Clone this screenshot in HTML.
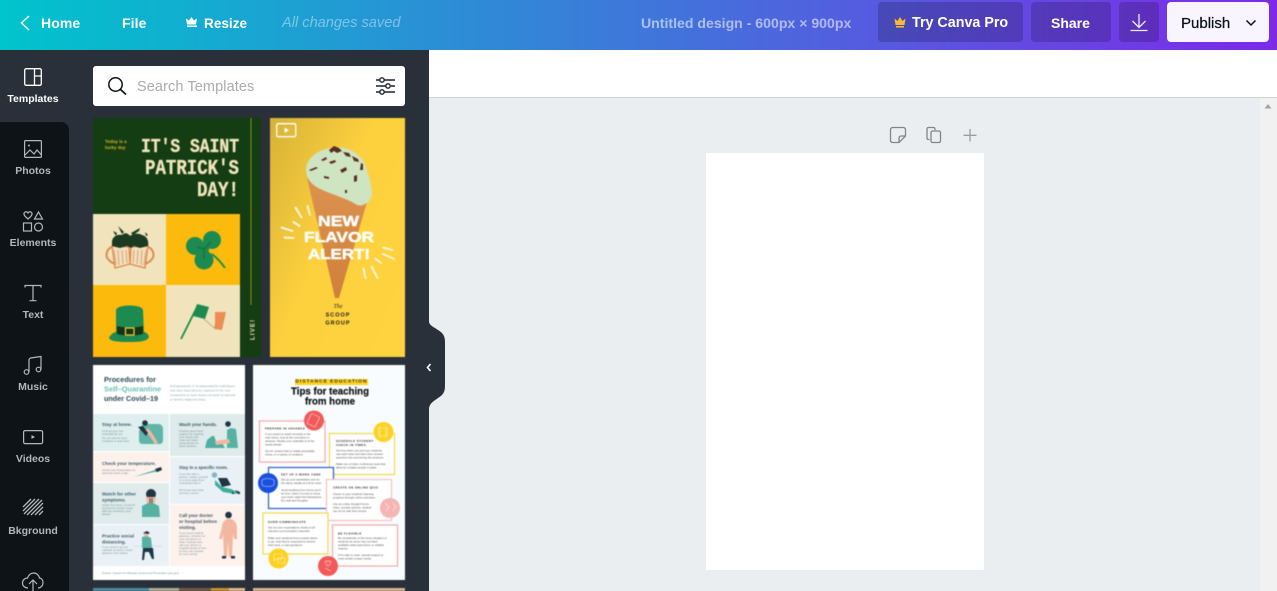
<!DOCTYPE html>
<html lang="en"><head><meta charset="utf-8"><title>Untitled design</title>
<style>
*{box-sizing:border-box}
html,body{margin:0;padding:0;width:1277px;height:591px;overflow:hidden;background:#ebeef1;font-family:"Liberation Sans",sans-serif}
.a{position:absolute}
#top{left:0;top:0;width:1277px;height:50px;background:linear-gradient(90deg,#00c4cc,#7d2ae8)}
#top span{position:absolute;top:15px;line-height:17px;font-size:14px;font-weight:700;color:#fff;white-space:nowrap}
.btn{position:absolute;top:2px;height:40px;border-radius:4px;background:rgba(0,0,0,.18)}
#sub{left:429px;top:50px;width:848px;height:48px;background:#fff;border-bottom:1px solid #d0d2d4}
#scroll{left:1260px;top:98px;width:17px;height:493px;background:#f1f1f1}
#page{left:706px;top:153px;width:278px;height:417px;background:#fff}
#panel{left:0;top:50px;width:429px;height:541px;background:#293039}
#rail{left:0;top:122px;width:69px;height:469px;background:#0e1318;border-top-right-radius:8px}
.lb{position:absolute;left:0;width:66px;text-align:center;font-size:10.5px;font-weight:700;color:#b4b7ba;line-height:12px}
#search{left:93px;top:66px;width:312px;height:40px;background:#fff;border-radius:3px}
#search span{position:absolute;left:44px;top:12px;font-size:14.5px;line-height:18px;color:#a9abad;letter-spacing:.1px}
svg{position:absolute;left:0;top:0;overflow:visible}
.th{filter:blur(.4px)}
</style></head><body>

<div class="a" id="sub"></div>
<div class="a" id="scroll"></div>
<div class="a" id="page"></div>
<div class="a" id="panel"></div>
<div class="a" id="rail"></div>

<div class="a" id="top">
<span style="left:41px;letter-spacing:.1px">Home</span>
<span style="left:122px;letter-spacing:.1px">File</span>
<span style="left:204px;font-size:13.6px">Resize</span>
<span style="left:282px;font-weight:400;font-style:italic;font-size:14.6px;color:rgba(255,255,255,.42)">All changes saved</span>
<span style="left:641px;font-size:14.1px;color:rgba(255,255,255,.55)">Untitled design - 600px × 900px</span>
<div class="btn" style="left:878px;width:145px"></div>
<div class="btn" style="left:1031px;width:80px"></div>
<div class="btn" style="left:1119px;width:40px"></div>
<div class="btn" style="left:1167px;width:102px;background:#f8f5fe"></div>
<span style="left:912px;top:15px;font-size:14.3px">Try Canva Pro</span>
<span style="left:1051px">Share</span>
<span style="left:1181px;top:15px;color:#0e1318;font-weight:400;font-size:15px;-webkit-text-stroke:.25px #0e1318">Publish</span>
</div>

<div class="lb" style="top:93px;color:#fff">Templates</div>
<div class="lb" style="top:165px">Photos</div>
<div class="lb" style="top:237px">Elements</div>
<div class="lb" style="top:309px">Text</div>
<div class="lb" style="top:381px">Music</div>
<div class="lb" style="top:453px">Videos</div>
<div class="lb" style="top:525px">Bkground</div>

<div class="a" id="search"><span>Search Templates</span></div>

<svg width="1277" height="591" viewBox="0 0 1277 591">
<!-- top bar icons -->
<path d="M29 16l-7.500 7 7.500 7" fill="none" stroke="#fff" stroke-width="1.400"/>
<path d="M186 18.500l3 2 2.500-3.500 2.500 3.500 3-2-1 6h-9zM187 25.500h10v1.500h-10z" fill="#fff"/>
<path d="M894.500 18.500l3 2.500 2.500-4 2.500 4 3-2.500-1 6.500h-9zM896 26h8v1.500h-8z" fill="#ffb92e"/>
<path d="M1139 14v13.500M1132.500 21l6.500 6.500 6.500-6.500M1130.500 30.500h17" fill="none" stroke="#f2ecfd" stroke-width="1.300"/>
<path d="M1246.500 20.500l4.500 4.500 4.500-4.500" fill="none" stroke="#0e1318" stroke-width="1.500"/>

<!-- search icons -->
<circle cx="115.500" cy="84.500" r="6.700" fill="none" stroke="#0e1318" stroke-width="1.500"/>
<path d="M120.500 89.500l5.500 5" stroke="#0e1318" stroke-width="1.800"/>
<g fill="none" stroke="#1c2228" stroke-width="1.400">
<path d="M376 80h4M384.500 80h10.500M376 86h9.500M391 86h4M376 92h4M384.500 92h10.500"/>
<circle cx="382" cy="80" r="2.200"/><circle cx="388" cy="86" r="2.200"/><circle cx="382" cy="92" r="2.200"/>
</g>

<!-- rail icons -->
<g fill="none" stroke="#fff" stroke-width="1.300">
<rect x="24.700" y="68.700" width="16.600" height="16.600" rx="1.500"/><path d="M34.500 69v16M34.500 76h7"/>
</g>
<g fill="none" stroke="#b4b7ba" stroke-width="1.200">
<rect x="24.600" y="140.600" width="16.800" height="16.800" rx="1"/>
<circle cx="29" cy="145.500" r="1" fill="#b4b7ba" stroke="none"/>
<path d="M25 155l5-5 4 4 3-4 4.500 5"/>
<path d="M28 213.500c1.500-1.500 3-.5 3.500.5.500-1 2-2 3.500-.5 1.500 1.500 0 3.500-3.500 6.500-3.500-3-5-5-3.500-6.500z" transform="translate(-3.500,-1)"/>
<path d="M38.500 212l4 7h-8z"/>
<rect x="23.500" y="223" width="8" height="8"/><circle cx="38.500" cy="227" r="4"/>
<path d="M25 287.500v-2h16v2M33 285.500v15M29.500 300.700h7"/>
<circle cx="26.500" cy="372" r="2.300"/><circle cx="38.500" cy="369.500" r="2.300"/>
<path d="M29 372v-12c0-1 .5-1.500 1.500-2l10.500-1.500v13"/>
<rect x="23.600" y="430.600" width="19" height="13" rx="1.500"/>
<path d="M31.500 435l3.500 2-3.500 2z" fill="#b4b7ba" stroke="none"/>
<path d="M23 507l8-8M23 511l12-12M24 514l15-15M27 515l15-15M31 515l12-12M35 515l8-8M39 515l4-4" stroke-width="1.300"/>
<path d="M28 588c-3 0-5.500-2-5.500-5s2.500-5 5-5c1-3 3.500-5 6-5 3.500 0 5.500 2.500 6 5 2 .3 3.500 2 3.500 4.500 0 3-2 5.500-5 5.500"/>
<path d="M33 591v-11M29 584l4-4 4 4"/>
</g>

<!-- collapse handle -->
<path d="M429 322c1 4 5 5 9 8 5 3 7 6 7 12v44c0 6-2 9-7 12-4 3-8 5-9 10z" fill="#293039"/>
<path d="M430.500 364l-3 3.500 3 3.500" fill="none" stroke="#fff" stroke-width="1.600"/>

<!-- page tools -->
<g fill="none" stroke="#80858a" stroke-width="1.300">
<path d="M892.500 127.500h11c1 0 2 1 2 2v6.500l-6.500 6.500h-6.500c-1 0-2-1-2-2v-11c0-1 1-2 2-2zM905.500 136h-4.500c-1 0-2 1-2 2v4.500"/>
<path d="M929.500 139.500h-1c-1 0-1.500-.5-1.500-1.500v-9c0-1 .5-1.500 1.500-1.500h5c1 0 1.500.5 1.500 1.500v1"/>
<rect x="931" y="131" width="9.500" height="11.500" rx="1.500"/>
<path d="M970 129v12.500M963.500 135.300h13" stroke="#9a9ea2"/>
</g>
<path d="M1264.500 108.500l3.500-4.500 3.500 4.500z" fill="#a3a3a3"/>

<g class="th">
<!-- CARD 1 : Saint Patrick -->
<rect x="93" y="118" width="168" height="239" fill="#143d13"/>
<rect x="93" y="214" width="73" height="71" fill="#f1e4bc"/><rect x="166" y="214" width="74" height="71" fill="#fcbb0c"/>
<rect x="93" y="285" width="73" height="72" fill="#fcbb0c"/><rect x="166" y="285" width="74" height="72" fill="#f1e4bc"/>
<rect x="250.500" y="118" width="1" height="187" fill="#8a8f1e"/>
<g font-weight="700" fill="#f1e4bc" stroke="#f1e4bc" stroke-width=".35" text-anchor="end" style="font-family:'Liberation Mono',monospace">
<text x="239" y="152" font-size="19" textLength="98" lengthAdjust="spacingAndGlyphs">IT'S SAINT</text>
<text x="239" y="174" font-size="21" textLength="94" lengthAdjust="spacingAndGlyphs">PATRICK'S</text>
<text x="239" y="196" font-size="21" textLength="42" lengthAdjust="spacingAndGlyphs">DAY!</text>
</g>
<text x="105" y="143" font-size="4.500" fill="#d7b422" font-weight="700">Today is a</text>
<text x="105" y="149" font-size="4.500" fill="#d7b422" font-weight="700">lucky day</text>
<text transform="translate(254.500,340) rotate(-90)" font-size="6" font-weight="700" fill="#f1e4bc" letter-spacing="1.200">LIVE!</text>
<!-- mugs -->
<g>
<path d="M112 247c-6 2-7 10-3 13 1 2 4 3 6 4" fill="none" stroke="#e08a4e" stroke-width="2"/>
<path d="M148 247c6 2 7 10 3 13-1 2-4 3-6 4" fill="none" stroke="#e08a4e" stroke-width="2"/>
<path d="M112 246l17 1 1 17-15 4z" fill="#f3e0bd" stroke="#e08a4e" stroke-width="1.300"/>
<path d="M148 246l-17 1-1 17 15 4z" fill="#f3e0bd" stroke="#e08a4e" stroke-width="1.300"/>
<path d="M114 250l2 15M118 250l1 15M122 250l1 14M126 250l1 13M134 250l-1 13M138 250l-1 14M142 250l-1 15M146 250l-2 15" stroke="#d9a77c" stroke-width="1.100"/>
<path d="M112 241c1-5 6-7 10-6 3-3 6-2 8 1 3-3 9-3 12-1 5 1 7 6 6 11l-8 2-6-2-3 2-4-2-7 2-8-2z" fill="#1c3a22"/>
<path d="M118 226l4 8 2-2zM131 233l9-5-1 3-6 4zM113 231l3 5 1-3zM145 232l3 3-2 1z" fill="#1c3a22"/>
</g>
<!-- clover -->
<g>
<path d="M212 254c5 4 9 8 13 14" stroke="#1d8a4f" stroke-width="1.900" fill="none"/>
<circle cx="212" cy="240" r="9" fill="#1d8a4f"/>
<circle cx="195" cy="246" r="9" fill="#1d8a4f"/>
<circle cx="204" cy="260" r="9.500" fill="#1d8a4f"/><circle cx="203" cy="249" r="6" fill="#1d8a4f"/>
<path d="M204 249l7-7M204 249l-7-2M204 249l0 10" stroke="#17703f" stroke-width="1.300"/>
</g>
<!-- hat -->
<path d="M116 310c1-6 26-6 27 0l1 23h-28z" fill="#1d8a4f"/>
<path d="M109 338c2-5 6-6 10-7l22 0c4 1 7 2 8 6-2 5-12 5-20 5s-18 0-20-4z" fill="#1d8a4f"/>
<path d="M117 326c8 2 18 2 26 0v8c-8 2-18 2-26 0z" fill="#14341a"/>
<rect x="125.500" y="328" width="8.500" height="7" fill="none" stroke="#f0c52c" stroke-width="1.300"/>
<!-- flag -->
<path d="M181 339l17-34" stroke="#1d8a4f" stroke-width="1.800"/>
<path d="M197 304l12 3-4 12-12-3z" fill="#1d8a4f"/>
<path d="M204 319l9 8 3 1" fill="none" stroke="#9a9a8a" stroke-width=".7"/>
<path d="M215 312l11 0-4 18-8-1 1-6z" fill="#ec8d54"/>

<!-- CARD 2 : Ice cream -->
<defs>
<linearGradient id="ig" x1="0" y1="0" x2="1" y2=".75"><stop offset="0" stop-color="#d6b236"/><stop offset=".5" stop-color="#fdd03e"/><stop offset="1" stop-color="#ffd23f"/></linearGradient>
<linearGradient id="cg" x1="0" y1="0" x2="0" y2="1"><stop offset="0" stop-color="#dd9250"/><stop offset="1" stop-color="#d0803a"/></linearGradient>
</defs>
<rect x="270" y="118" width="135" height="239" fill="url(#ig)"/>
<path d="M307 178l60 24-28 96h-4z" fill="url(#cg)"/>
<path d="M306 170C306 158 318 150 330 148C345 145 358 152 364 162C368 172 372 185 372 195C370 203 362 207 357 205C345 197 325 193 315 186C309 182 306 176 306 170z" fill="#cfe4c0"/>
<g fill="#5a2f1f">
<path d="M329 150l5-4 5 2 3 3-5 2-3-2-3 2zM309 170l7-3 2 1-7 3zM321 160l5-3 1 2-4 2zM343 152l6 1 2 4-5-1zM352 156l6 3 1 3-5-1zM361 163l2 1 0 6-3 0zM329 162l6-2 1 2-5 2zM340 170l6-3 1 3-5 3zM354 176l3-1 0 6-3 1zM324 176l5 1 0 2-5-1zM345 190l2 0 0 3-2 0z"/>
</g>
<g stroke="#fff" stroke-opacity=".8" stroke-width="2" stroke-linecap="round">
<path d="M295.500 207.500l6 10M307.500 206l2.500 9M293.500 222l6 4M281.500 227.500l11 3.500M284.500 237.500l9 .5M392 250l-9-2.500M394 259l-11-5M381 263l-6-4.500M365.500 278l-2-9.500M377.500 278l-6-11.500"/>
</g>
<g font-weight="700" fill="#fff" text-anchor="middle" font-size="15" stroke="#fff" stroke-width=".5">
<text x="338.500" y="226" textLength="41" lengthAdjust="spacingAndGlyphs">NEW</text>
<text x="339" y="242" textLength="70" lengthAdjust="spacingAndGlyphs">FLAVOR</text>
<text x="339" y="259" textLength="62" lengthAdjust="spacingAndGlyphs">ALERT!</text>
</g>
<text x="338" y="308" font-size="6" font-style="italic" text-anchor="middle" fill="#2a2a1a" style="font-family:'Liberation Serif',serif">The</text>
<text x="338" y="316.500" font-size="5.500" font-weight="700" text-anchor="middle" fill="#1a1a1a" letter-spacing="1">SCOOP</text>
<text x="338" y="324.500" font-size="5.500" font-weight="700" text-anchor="middle" fill="#1a1a1a" letter-spacing="1">GROUP</text>
<rect x="276.700" y="123.700" width="19" height="13" rx="1.500" fill="none" stroke="#fff" stroke-width="1.300"/>
<path d="M284.500 127.500l4.500 2.700-4.500 2.700z" fill="#fff"/>

<!-- CARD 3 : Covid -->
<rect x="93" y="365" width="152" height="215" fill="#fff"/>
<rect x="93" y="414" width="76" height="37" fill="#deefee"/>
<rect x="93" y="452" width="76" height="30" fill="#fdf1ec"/>
<rect x="93" y="483" width="76" height="41" fill="#dfeceb"/>
<rect x="93" y="525" width="76" height="41" fill="#e9f1f6"/>
<rect x="170" y="414" width="75" height="42" fill="#deebea"/>
<rect x="170" y="457" width="75" height="47" fill="#e9f1f6"/>
<rect x="170" y="505" width="75" height="61" fill="#fdf1ec"/>
<g font-size="7.400" font-weight="700" fill="#2b4c58">
<text x="104" y="382" textLength="52" lengthAdjust="spacingAndGlyphs">Procedures for</text>
<text x="104" y="391.500" fill="#6cc0b4" textLength="57" lengthAdjust="spacingAndGlyphs">Self–Quarantine</text>
<text x="104" y="401" textLength="54" lengthAdjust="spacingAndGlyphs">under Covid–19</text>
</g>
<g font-size="3" fill="#6d8992" font-style="italic" style="font-family:'Liberation Serif',serif">
<text x="170" y="387" textLength="65">Self-quarantine is recommended for individuals</text>
<text x="170" y="391.500" textLength="60">who have been directly exposed to the new</text>
<text x="170" y="396" textLength="65">coronavirus or have history of travel to infected</text>
<text x="170" y="400.500" textLength="36">or heavily impacted areas.</text>
</g>
<g font-size="4.500" font-weight="700" fill="#3a5a66">
<text x="102" y="426" textLength="30">Stay at home.</text>
<text x="102" y="465" textLength="54">Check your temperature.</text>
<text x="102" y="495.500" textLength="34">Watch for other</text>
<text x="102" y="501.500">symptoms.</text>
<text x="102" y="537.500" textLength="32">Practice social</text>
<text x="102" y="543.500">distancing.</text>
<text x="179" y="426" textLength="38">Wash your hands.</text>
<text x="179" y="469" textLength="49">Stay in a specific room.</text>
<text x="179" y="517" textLength="34">Call your doctor</text>
<text x="179" y="523" textLength="38">or hospital before</text>
<text x="179" y="529">visiting.</text>
</g>
<g font-size="2.800" fill="#7b939c">
<text x="102" y="432">Limit all your non-</text><text x="102" y="435">essential trip out.</text>
<text x="102" y="439">Go out only for food,</text><text x="102" y="442">medicine or real need.</text>
<text x="102" y="471">Check your temperature at</text><text x="102" y="474">least two times a day.</text>
<text x="102" y="506">Aside from fever, Covid-19</text><text x="102" y="509">symptoms include cough,</text><text x="102" y="512">difficulty breathing, and</text><text x="102" y="515">fatigue.</text>
<text x="102" y="548">If you need to go out,</text><text x="102" y="551">maintain at least 1 meter</text><text x="102" y="554">distance from others.</text>
<text x="179" y="432">Practice good hand</text><text x="179" y="435">hygiene by washing</text><text x="179" y="438">your hands with</text><text x="179" y="441">soap and water</text><text x="179" y="444">using alcohol or</text><text x="179" y="447">hand sanitizer.</text>
<text x="179" y="475">If you live with a</text><text x="179" y="478">person, isolate yourself</text><text x="179" y="481">in a room away from</text><text x="179" y="484">everybody else in</text><text x="179" y="491">the house and other</text><text x="179" y="494">common rooms.</text>
<text x="179" y="534">If you need medical</text><text x="179" y="537">attention, whether for</text><text x="179" y="540">your symptoms or</text><text x="179" y="543">other medical care,</text><text x="179" y="546">call your doctor or</text><text x="179" y="549">hospital ahead of time</text><text x="179" y="552">so they can prepare</text><text x="179" y="555">for your arrival.</text>
</g>
<text x="102" y="574" font-size="2.900" fill="#7b939c" textLength="77">Source: Centers for Disease Control and Prevention (cdc.gov)</text>
<!-- figures -->
<path d="M140 430c0-4 3-6 6-6h12c3 0 5 2 5 5v11c0 2-1 4-3 4h-18c-2 0-3-2-3-4v-7c0-2 0-3 1-3z" fill="#5fb5a8"/>
<path d="M143 432l6 3 6 9 3-1-6-10-4-5z" fill="#f0b8a0"/>
<circle cx="145" cy="423" r="2.800" fill="#1e3545"/>
<path d="M138 427l5-1 5 7-2 3z" fill="#1e3545"/>
<path d="M133 477l22-7 3-2 4 1-4 3-4 0z" fill="#55b2a3"/><path d="M155 469l6-2 1 3-5 2z" fill="#1e3545"/>
<path d="M142 506l6-3h5l6 3 1 11h-18z" fill="#55b2a3"/>
<circle cx="151" cy="494" r="5" fill="#1e3545"/>
<path d="M146 497h10l-1 6h-8z" fill="#f0b8a0"/>
<path d="M150 498v5M152 498v5" stroke="#1e3545" stroke-width=".8"/>
<path d="M134 546h28" stroke="#b8d2d2" stroke-width=".5"/>
<path d="M142 537l5-1 4 2 1 10h-10z" fill="#55b2a3"/><circle cx="146" cy="534" r="2.500" fill="#f0b8a0"/><path d="M143 533l4-2 3 2-2 1z" fill="#1e3545"/>
<path d="M143 548h10l1 11h-2l-3-7h-4l-1 8h-2z" fill="#1e3545"/>
<path d="M205 448l2-8 5-4 2 0 2 5 5 0 4 7z" fill="#3ea79a" opacity=".9"/>
<path d="M227 430l4-2 5 1 2 19h-11z" fill="#55b2a3"/><circle cx="228" cy="424" r="2.800" fill="#1e3545"/>
<path d="M215 441l14-2 1 4-14 2z" fill="#f0b8a0"/>
<circle cx="214.500" cy="475" r="2.800" fill="#8ab7c6"/>
<path d="M215 480l7 7 9 2 8 4-4 1-12-2-8-7z" fill="#3cae9d"/>
<path d="M218 478l9 0 4 7-9 2z" fill="#1e3545"/><path d="M235 490l5 2 0 2-2 0zM232 491l2 3-2 0z" fill="#1e3545"/>
<path d="M222 527c0-5 3-7 5-8h4c3 1 5 3 6 8l0 12-3 0-1-5-1 23h-3l-1-16-1 16h-3l-1-23-1 5-3 0z" fill="#f3b7a0"/>
<circle cx="228.500" cy="515" r="3.300" fill="#1e3545"/>
<path d="M222 556h4v2.500h-4zM231 556h4v2.500h-4z" fill="#1e3545"/>

<!-- CARD 4 : Tips -->
<rect x="253" y="365" width="152" height="215" fill="#f9fcfe"/>
<rect x="295" y="379" width="73" height="6" fill="#ffd21f"/>
<text x="295.500" y="382.500" font-size="4.800" font-weight="700" fill="#2a2a2a" textLength="71">DISTANCE EDUCATION</text>
<g font-size="10.500" font-weight="700" fill="#0e0e10" text-anchor="middle" stroke="#0e0e10" stroke-width=".2">
<text x="330" y="394.500" textLength="78" lengthAdjust="spacingAndGlyphs">Tips for teaching</text>
<text x="330" y="404.500" textLength="50" lengthAdjust="spacingAndGlyphs">from home</text>
</g>
<g fill="#fff" stroke-width="1.200">
<rect x="259.500" y="421" width="65.500" height="41" stroke="#f4a9a9"/>
<rect x="329.500" y="433.500" width="65" height="41" stroke="#f6d84a"/>
<rect x="268.500" y="467.500" width="65" height="41" stroke="#2d5bd0"/>
<rect x="326.500" y="479.500" width="65" height="41" stroke="#f6c0c0"/>
<rect x="263" y="513" width="65" height="41" stroke="#f6d84a"/>
<rect x="332.500" y="525" width="65" height="41" stroke="#f4a9a9"/>
</g>
<circle cx="314" cy="420.500" r="10" fill="#f25a5a"/>
<circle cx="383.500" cy="432" r="10" fill="#ffd21f"/>
<circle cx="268" cy="483" r="10" fill="#1a4fe0"/>
<circle cx="390" cy="508" r="10" fill="#f5b5b5"/>
<circle cx="278.500" cy="558.500" r="10" fill="#ffd21f"/>
<circle cx="328" cy="566" r="10" fill="#f25a5a"/>
<g fill="none" stroke="#fff" stroke-width=".6" opacity=".75">
<rect x="309" y="415" width="9" height="11" rx="1" transform="rotate(25 314 420)"/>
<path d="M378 428h10l-1 8h-8zM380 426v12M386 426v12"/>
<path d="M262 480c3-2 9-2 12 0v5c-3 2-9 2-12 0z"/>
<path d="M385 503l4 4-3 4M393 503l3 4-3 4"/>
<path d="M274 554h8v5h-6l-2 2zM278 558h7v5h-7z"/>
<path d="M328 562c2-3 5 0 0 4-5-4-2-7 0-4zM325 568l6 3"/>
</g>
<g font-size="2.900" font-weight="700" fill="#2a2a2a" letter-spacing=".45">
<text x="265" y="429.500">PREPARE IN ADVANCE</text>
<text x="336" y="442">SCHEDULE STUDENT</text><text x="336" y="446">CHECK-IN TIMES</text>
<text x="281" y="475.500">SET UP A WORK ZONE</text>
<text x="333" y="488.500">CREATE AN ONLINE QUIZ</text>
<text x="268" y="523">OVER-COMMUNICATE</text>
<text x="338" y="534.500">BE FLEXIBLE</text>
</g>
<g font-size="2.800" fill="#555">
<text x="265" y="435">If you expect to teach remotely in the</text><text x="265" y="438.500">near future, look at the curriculum in</text><text x="265" y="442">advance. Modify your materials to fit the</text><text x="265" y="445.500">needs ahead.</text>
<text x="265" y="452">Opt for content that is readily accessible</text><text x="265" y="455.500">online, in a variety of mediums.</text>
<text x="336" y="451.500">Set time when you and your students</text><text x="336" y="455">can each raise and have them answer</text><text x="336" y="458.500">questions live and during the sessions.</text>
<text x="336" y="465">Make use of video conference tools that</text><text x="336" y="468.500">allow for multiple people in tasks.</text>
<text x="281" y="480.500">Set up your workstation and do</text><text x="281" y="484">the same, ideally at a fit for work.</text>
<text x="281" y="491">Avoid anything from home you'd</text><text x="281" y="494.500">do from, when it is time to focus</text><text x="281" y="498">your brain might find distractions.</text><text x="281" y="501.500">Do craft and thoughts.</text>
<text x="333" y="495">Check on your students' learning</text><text x="333" y="498.500">progress through online exercises.</text>
<text x="333" y="505">Use an online Google Forms,</text><text x="333" y="508.500">video, provide quizzes, student</text><text x="333" y="512">can do for with their device.</text>
<text x="268" y="528.500">Set out your expectations clearly in all</text><text x="268" y="532">relevant communication channels.</text>
<text x="268" y="539">Make sure students know exactly where</text><text x="268" y="542.500">to go, how they're supposed to submit</text><text x="268" y="546">their work, or ask questions.</text>
<text x="338" y="539">Be considerate of the home situation of</text><text x="338" y="542.500">students as some may not have</text><text x="338" y="546">available adult supervision or reliable</text><text x="338" y="549.500">Internet.</text>
<text x="338" y="556">If it's safe to meet, special support to</text><text x="338" y="559.500">meet certain unique needs.</text>
</g>

<!-- next row thumbs -->
<rect x="93" y="588" width="56" height="3" fill="#4d8a9e"/><rect x="149" y="588" width="30" height="3" fill="#b0ab90"/><rect x="179" y="588" width="32" height="3" fill="#6f5a45"/><rect x="211" y="588" width="18" height="3" fill="#c8912f"/><rect x="229" y="588" width="16" height="3" fill="#e0b88a"/>
<rect x="253" y="588" width="152" height="3" fill="#d8b590"/>
</g>
</svg>
</body></html>
